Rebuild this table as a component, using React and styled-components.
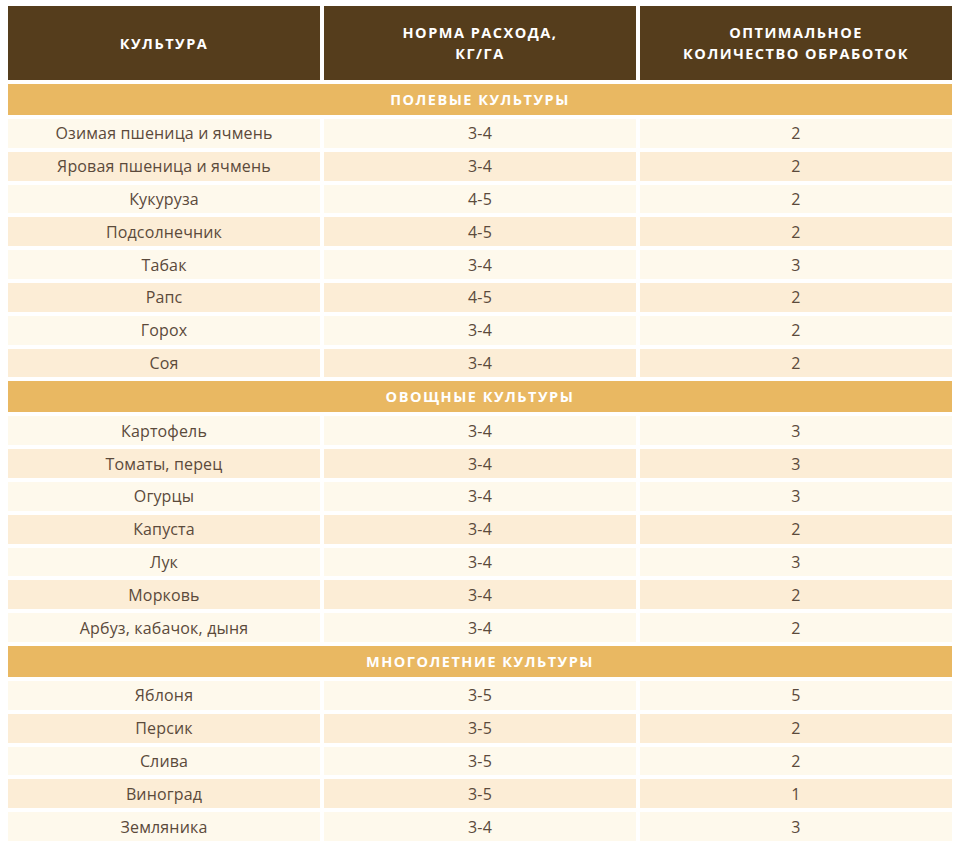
import React from "react";
import styled, { createGlobalStyle } from "styled-components";

const GlobalStyle = createGlobalStyle`
  body {
    margin: 0;
    background: #ffffff;
    font-family: "Open Sans", "Liberation Sans", sans-serif;
  }
`;

const Table = styled.table`
  width: 952px;
  margin: 2px 0 0 4px;
  border-collapse: separate;
  border-spacing: 4px;
  table-layout: fixed;
  color: #5b4a3b;
`;

const HeadCell = styled.th`
  width: 312px;
  height: 74px;
  padding: 0 6px;
  box-sizing: border-box;
  background: #553d1c;
  color: #ffffff;
  font-size: 14.5px;
  font-weight: 700;
  letter-spacing: 1.5px;
  line-height: 21px;
  text-align: center;
  vertical-align: middle;
  text-transform: uppercase;
`;

const SectionCell = styled.td`
  height: 31px;
  padding: 0;
  background: #e9b862;
  color: #ffffff;
  font-size: 14.5px;
  font-weight: 700;
  letter-spacing: 1.5px;
  text-align: center;
  text-transform: uppercase;
`;

const Cell = styled.td`
  height: 28.8px;
  padding: 0;
  background: ${(props) => (props.even ? "#fcedd6" : "#fef9ec")};
  font-size: 16px;
  letter-spacing: 0.15px;
  text-align: center;
  vertical-align: middle;
`;

const sections = [
  {
    title: "Полевые культуры",
    rows: [
      ["Озимая пшеница и ячмень", "3-4", "2"],
      ["Яровая пшеница и ячмень", "3-4", "2"],
      ["Кукуруза", "4-5", "2"],
      ["Подсолнечник", "4-5", "2"],
      ["Табак", "3-4", "3"],
      ["Рапс", "4-5", "2"],
      ["Горох", "3-4", "2"],
      ["Соя", "3-4", "2"],
    ],
  },
  {
    title: "Овощные культуры",
    rows: [
      ["Картофель", "3-4", "3"],
      ["Томаты, перец", "3-4", "3"],
      ["Огурцы", "3-4", "3"],
      ["Капуста", "3-4", "2"],
      ["Лук", "3-4", "3"],
      ["Морковь", "3-4", "2"],
      ["Арбуз, кабачок, дыня", "3-4", "2"],
    ],
  },
  {
    title: "Многолетние культуры",
    rows: [
      ["Яблоня", "3-5", "5"],
      ["Персик", "3-5", "2"],
      ["Слива", "3-5", "2"],
      ["Виноград", "3-5", "1"],
      ["Земляника", "3-4", "3"],
    ],
  },
];

export default function App() {
  return (
    <>
      <GlobalStyle />
      <Table>
        <thead>
          <tr>
            <HeadCell>Культура</HeadCell>
            <HeadCell>
              Норма расхода,
              <br />
              кг/га
            </HeadCell>
            <HeadCell>
              Оптимальное
              <br />
              количество обработок
            </HeadCell>
          </tr>
        </thead>
        {sections.map((section) => (
          <tbody key={section.title}>
            <tr>
              <SectionCell colSpan={3}>{section.title}</SectionCell>
            </tr>
            {section.rows.map((row, i) => (
              <tr key={row[0]}>
                {row.map((value, j) => (
                  <Cell key={j} even={i % 2 === 1}>
                    {value}
                  </Cell>
                ))}
              </tr>
            ))}
          </tbody>
        ))}
      </Table>
    </>
  );
}
